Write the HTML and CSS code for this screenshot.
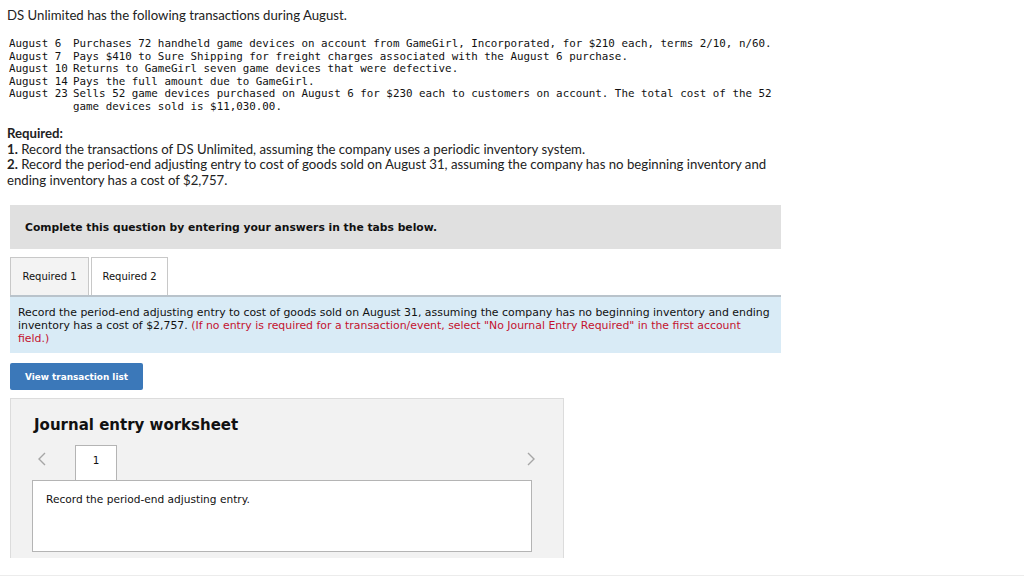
FILE: index.html
```html
<!DOCTYPE html>
<html>
<head>
<meta charset="utf-8">
<link rel="stylesheet" href="styles.css">
</head>
<body>
<div class="page">
  <p class="intro">DS Unlimited has the following transactions during August.</p>
  <table class="tx">
    <tr><td class="d">August 6</td><td>Purchases 72 handheld game devices on account from GameGirl, Incorporated, for $210 each, terms 2/10, n/60.</td></tr>
    <tr><td class="d">August 7</td><td>Pays $410 to Sure Shipping for freight charges associated with the August 6 purchase.</td></tr>
    <tr><td class="d">August 10</td><td>Returns to GameGirl seven game devices that were defective.</td></tr>
    <tr><td class="d">August 14</td><td>Pays the full amount due to GameGirl.</td></tr>
    <tr><td class="d">August 23</td><td>Sells 52 game devices purchased on August 6 for $230 each to customers on account. The total cost of the 52 game devices sold is $11,030.00.</td></tr>
  </table>
  <div class="req">
    <p class="req-title">Required:</p>
    <p><b>1.</b> Record the transactions of DS Unlimited, assuming the company uses a periodic inventory system.</p>
    <p><b>2.</b> Record the period-end adjusting entry to cost of goods sold on August 31, assuming the company has no beginning inventory and ending inventory has a cost of $2,757.</p>
  </div>
  <div class="question">
    <div class="banner">Complete this question by entering your answers in the tabs below.</div>
    <div class="tabs">
      <div class="tab">Required 1</div>
      <div class="tab active">Required 2</div>
    </div>
    <div class="info">Record the period-end adjusting entry to cost of goods sold on August 31, assuming the company has no beginning inventory and ending inventory has a cost of $2,757. <span class="red">(If no entry is required for a transaction/event, select "No Journal Entry Required" in the first account field.)</span></div>
    <button class="btn">View transaction list</button>
    <div class="worksheet">
      <h2>Journal entry worksheet</h2>
      <div class="nav">
        <span class="chev">
          <svg width="10" height="14" viewBox="0 0 10 14"><path d="M8 1 L2 7 L8 13" fill="none" stroke="#a6a6a6" stroke-width="1.4"/></svg>
        </span>
        <div class="wtab">1</div>
        <span class="spacer"></span>
        <span class="chev">
          <svg width="10" height="14" viewBox="0 0 10 14"><path d="M2 1 L8 7 L2 13" fill="none" stroke="#a6a6a6" stroke-width="1.4"/></svg>
        </span>
      </div>
      <div class="wbox">Record the period-end adjusting entry.</div>
    </div>
  </div>
</div>
<div class="footer-line"></div>
</body>
</html>
```
FILE: styles.css
```css
html, body {
  margin: 0;
  padding: 0;
  background: #fff;
}
body {
  width: 1024px;
  height: 580px;
  overflow: hidden;
  position: relative;
}
.page {
  padding: 7px 0 0 7px;
  height: 566px;
  box-sizing: border-box;
  overflow: hidden;
}
.intro {
  margin: 0;
  font-family: Lato, "Open Sans", sans-serif;
  font-size: 13.2px;
  line-height: 16px;
  color: #222;
}
.tx {
  margin: 15px 0 0 2px;
  border-collapse: collapse;
  font-family: "DejaVu Sans Mono", monospace;
  font-size: 10.85px;
  line-height: 12.5px;
  color: #111;
  width: 775px;
}
.tx td {
  padding: 0;
  vertical-align: top;
}
.tx td.d {
  width: 64px;
  white-space: nowrap;
}
.req {
  margin-top: 13px;
  font-family: Lato, "Open Sans", sans-serif;
  font-size: 13.2px;
  line-height: 15.6px;
  color: #222;
  width: 775px;
}
.req p { margin: 0; }
.req-title { font-weight: bold; }
.question {
  margin: 17px 0 0 3px;
  width: 771px;
}
.banner {
  background: #e0e0e0;
  height: 44px;
  display: flex;
  align-items: center;
  padding-left: 15px;
  font-family: "DejaVu Sans", Verdana, sans-serif;
  font-weight: bold;
  font-size: 10.75px;
  color: #111;
}
.tabs {
  display: flex;
  gap: 2px;
  margin-top: 8px;
}
.tab {
  height: 38px;
  box-sizing: border-box;
  padding: 0;
  display: flex;
  align-items: center;
  justify-content: center;
  white-space: nowrap;
  background: #f3f3f3;
  border: 1px solid #c8c8c8;
  border-bottom: none;
  font-family: "DejaVu Sans", Verdana, sans-serif;
  font-size: 10px;
  color: #111;
  width: 79px;
}
.tab.active {
  background: #fff;
  width: 77px;
}
.info {
  background: #d9ebf6;
  border-top: 2px solid #b9c3cb;
  padding: 9px 10px 8px 8px;
  font-family: "DejaVu Sans", Verdana, sans-serif;
  font-size: 10.9px;
  line-height: 13px;
  color: #111;
}
.red { color: #c4122f; }
.btn {
  display: block;
  margin-top: 10px;
  width: 133px;
  height: 27px;
  border: none;
  border-radius: 2px;
  background: #3b78b9;
  color: #fff;
  font-family: "DejaVu Sans", Verdana, sans-serif;
  font-weight: bold;
  font-size: 8.9px;
  padding: 0;
}
.worksheet {
  margin-top: 8px;
  width: 554px;
  height: 160px;
  box-sizing: border-box;
  background: #f2f2f2;
  border: 1px solid #dcdcdc;
  border-bottom: none;
  padding: 15px 31px 0 21px;
  overflow: hidden;
}
.worksheet h2 {
  margin: 0 0 0 2px;
  font-family: "DejaVu Sans", Verdana, sans-serif;
  font-weight: bold;
  font-size: 15px;
  line-height: 22px;
  color: #111;
}
.nav {
  display: flex;
  align-items: flex-start;
  margin-top: 9px;
  height: 35px;
}
.chev {
  width: 10px;
  padding: 7px 0 0 0;
  margin-left: 5px;
}
.chev:last-child { margin-left: 0; margin-right: -4px; }
.wtab {
  margin-left: 28px;
  width: 42px;
  height: 35px;
  box-sizing: border-box;
  background: #fff;
  border: 1px solid #b4b4b4;
  border-bottom: none;
  display: flex;
  justify-content: center;
  padding-top: 8px;
  font-family: "DejaVu Sans", Verdana, sans-serif;
  font-size: 10.4px;
  color: #111;
  position: relative;
  z-index: 1;
  margin-bottom: -1px;
}
.spacer { flex: 1; }
.wbox {
  background: #fff;
  border: 1px solid #b4b4b4;
  height: 72px;
  box-sizing: border-box;
  padding: 12px 13px;
  font-family: "DejaVu Sans", Verdana, sans-serif;
  font-size: 10.6px;
  color: #111;
}
.footer-line {
  position: absolute;
  left: 0;
  right: 0;
  top: 575px;
  height: 1px;
  background: #ececec;
}
```
